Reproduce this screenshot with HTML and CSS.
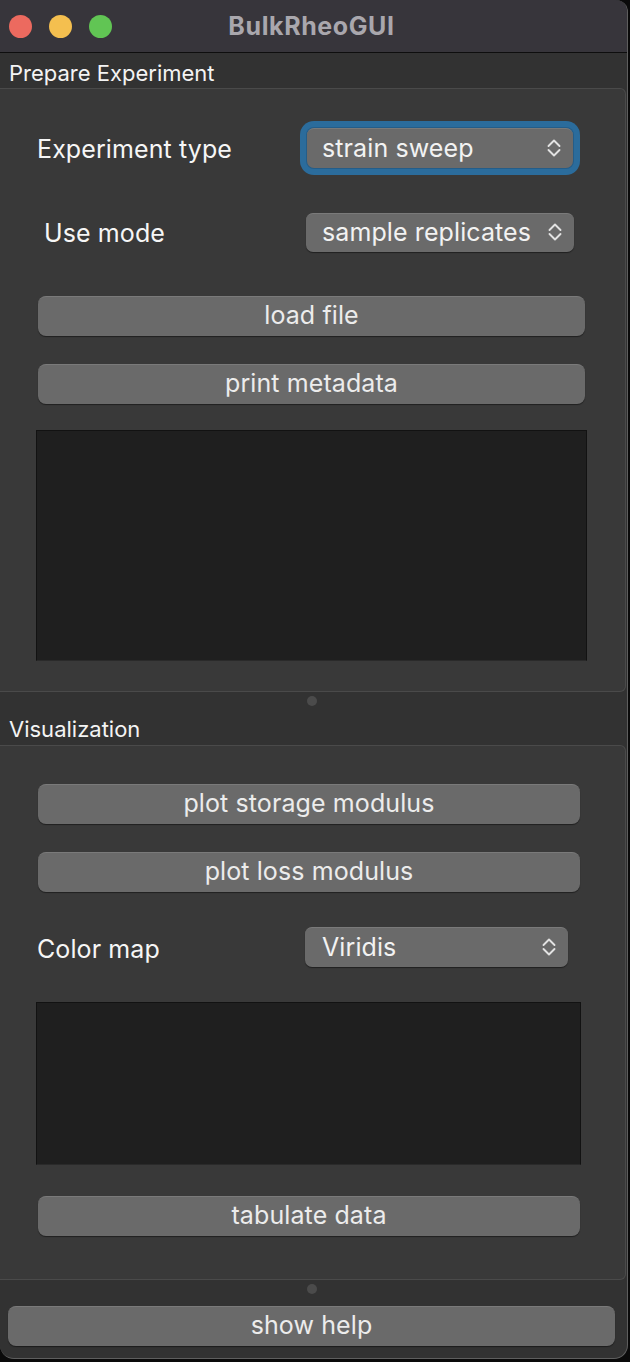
FILE: index.html
```html
<!DOCTYPE html>
<html>
<head>
<meta charset="utf-8">
<link rel="stylesheet" href="styles.css">
<title>BulkRheoGUI</title>
</head>
<body>
<div class="window">
  <div class="titlebar">
    <div class="lights">
      <span class="light red"></span>
      <span class="light yellow"></span>
      <span class="light green"></span>
    </div>
    <div class="title">BulkRheoGUI</div>
    <div></div>
  </div>

  <div class="section-label">Prepare Experiment</div>
  <div class="group group-prepare">
    <div class="form-row row-exp">
      <span class="label">Experiment type</span>
      <div class="combo focused">
        <span>strain sweep</span>
        <svg class="chev" width="16" height="22" viewBox="0 0 16 22"><path d="M2.5 9 L8 3.5 L13.5 9 M2.5 13 L8 18.5 L13.5 13" fill="none" stroke="#e2e2e2" stroke-width="1.9" stroke-linecap="round" stroke-linejoin="round"/></svg>
      </div>
    </div>
    <div class="form-row row-mode">
      <span class="label">Use mode</span>
      <div class="combo">
        <span>sample replicates</span>
        <svg class="chev" width="16" height="22" viewBox="0 0 16 22"><path d="M2.5 9 L8 3.5 L13.5 9 M2.5 13 L8 18.5 L13.5 13" fill="none" stroke="#e2e2e2" stroke-width="1.9" stroke-linecap="round" stroke-linejoin="round"/></svg>
      </div>
    </div>
    <button class="btn btn-load">load file</button>
    <button class="btn btn-print">print metadata</button>
    <div class="textbox textbox-meta"></div>
  </div>

  <div class="splitter"><span class="dot"></span></div>

  <div class="section-label section-vis">Visualization</div>
  <div class="group group-vis">
    <button class="btn btn-storage">plot storage modulus</button>
    <button class="btn btn-loss">plot loss modulus</button>
    <div class="form-row row-cmap">
      <span class="label">Color map</span>
      <div class="combo">
        <span>Viridis</span>
        <svg class="chev" width="16" height="22" viewBox="0 0 16 22"><path d="M2.5 9 L8 3.5 L13.5 9 M2.5 13 L8 18.5 L13.5 13" fill="none" stroke="#e2e2e2" stroke-width="1.9" stroke-linecap="round" stroke-linejoin="round"/></svg>
      </div>
    </div>
    <div class="textbox textbox-plot"></div>
    <button class="btn btn-tab">tabulate data</button>
  </div>

  <div class="splitter splitter-bottom"><span class="dot"></span></div>

  <div class="help-wrap">
    <button class="btn btn-help">show help</button>
  </div>
</div>
</body>
</html>
```

FILE: styles.css
```css
* { box-sizing: border-box; }

html, body {
  margin: 0;
  padding: 0;
  background: #0a0a0a;
}

body {
  width: 630px;
  height: 1362px;
  overflow: hidden;
  font-family: Inter, "Noto Sans", sans-serif;
  color: #f2f2f2;
}

.window {
  width: 628px;
  height: 1359px;
  background: #323232;
  border-right: 1px solid #5e5e5e;
  border-bottom: 1px solid #5e5e5e;
  border-radius: 0 12px 14px 14px;
  overflow: hidden;
  display: flex;
  flex-direction: column;
}

.titlebar {
  height: 53px;
  flex: none;
  background: #37353b;
  border-bottom: 1px solid #0e0e0e;
  display: grid;
  grid-template-columns: 1fr auto 1fr;
  align-items: center;
}

.lights {
  display: flex;
  gap: 17px;
  padding-left: 9px;
}

.light {
  width: 23px;
  height: 23px;
  border-radius: 50%;
  display: block;
}
.red { background: #ec6a5f; }
.yellow { background: #f4bf4f; }
.green { background: #61c554; }

.title {
  font-weight: 700;
  font-size: 25px;
  color: #a9a7ad;
  letter-spacing: 0.6px;
  padding-right: 4px;
}

.section-label {
  height: 35px;
  flex: none;
  padding-left: 9px;
  font-size: 22px;
  line-height: 40px;
  color: #f4f4f4;
}
.section-vis {
  line-height: 39px;
}

.group {
  flex: none;
  width: 626px;
  background: #393939;
  border: 1px solid #4a4a4a;
  border-left: none;
  border-radius: 0 6px 6px 0;
  padding-left: 36px;
  display: flex;
  flex-direction: column;
}

.group-prepare {
  padding-top: 39px;
  padding-right: 38px;
  padding-bottom: 30px;
}

.group-vis {
  padding-top: 38px;
  padding-right: 44px;
  padding-bottom: 43px;
}

.form-row {
  display: grid;
  align-items: center;
  height: 40px;
}
.row-exp { grid-template-columns: 271px 266px; }
.row-mode { grid-template-columns: 270px 268px; margin-top: 44px; }
.row-cmap { grid-template-columns: 269px 263px; margin-top: 35px; }

.label {
  font-size: 25px;
  letter-spacing: 0.1px;
  color: #f6f6f6;
  padding-top: 2px;
}
.row-exp .label { padding-left: 1px; }
.row-mode .label { padding-left: 8px; padding-top: 2px; }
.row-cmap .label { padding-left: 1px; padding-top: 3px; }

.combo {
  height: 40px;
  border-radius: 7px;
  background: #6a6a6a;
  border-top: 1px solid #7a7a7a;
  box-shadow: 0 1px 1px rgba(0,0,0,0.45);
  display: flex;
  align-items: center;
  justify-content: space-between;
  padding: 0 11px 2px 15px;
  font-size: 25px;
  letter-spacing: 0.1px;
  color: #f2f2f2;
}
.row-mode .combo { padding-left: 16px; height: 39px; }
.row-cmap .combo { padding-left: 17px; }

.combo.focused {
  box-shadow: 0 0 0 1px #245d89, 0 0 0 7px #2b6c9c;
}

.chev { display: block; }

.btn {
  display: block;
  height: 40px;
  border: none;
  border-top: 1px solid #7a7a7a;
  border-radius: 8px;
  background: #6a6a6a;
  box-shadow: 0 1px 1px rgba(0,0,0,0.45);
  color: #ececec;
  font-family: Inter, "Noto Sans", sans-serif;
  font-size: 25px;
  letter-spacing: 0.1px;
  padding: 0 0 3px 0;
  text-align: center;
  margin: 0 2px;
}

.btn-load { margin-top: 44px; }
.btn-print { margin-top: 28px; }
.btn-loss { margin-top: 28px; }
.btn-tab { margin-top: 31px; }
.group-vis .btn { margin-right: 1px; }

.textbox {
  background: #1f1f1f;
  border: 1px solid #121212;
  border-bottom-color: #2a2a2a;
}
.textbox-meta { height: 231px; margin-top: 26px; }
.textbox-plot { height: 163px; margin-top: 35px; }

.splitter {
  flex: none;
  height: 18px;
  display: flex;
  align-items: center;
  justify-content: center;
  padding-right: 4px;
}
.splitter-bottom { height: 18px; }

.dot {
  width: 10px;
  height: 10px;
  border-radius: 50%;
  background: #4b4b4b;
  display: block;
}

.help-wrap {
  padding: 8px 0 0 8px;
}

.btn-help {
  width: 607px;
  margin: 0;
}
```
